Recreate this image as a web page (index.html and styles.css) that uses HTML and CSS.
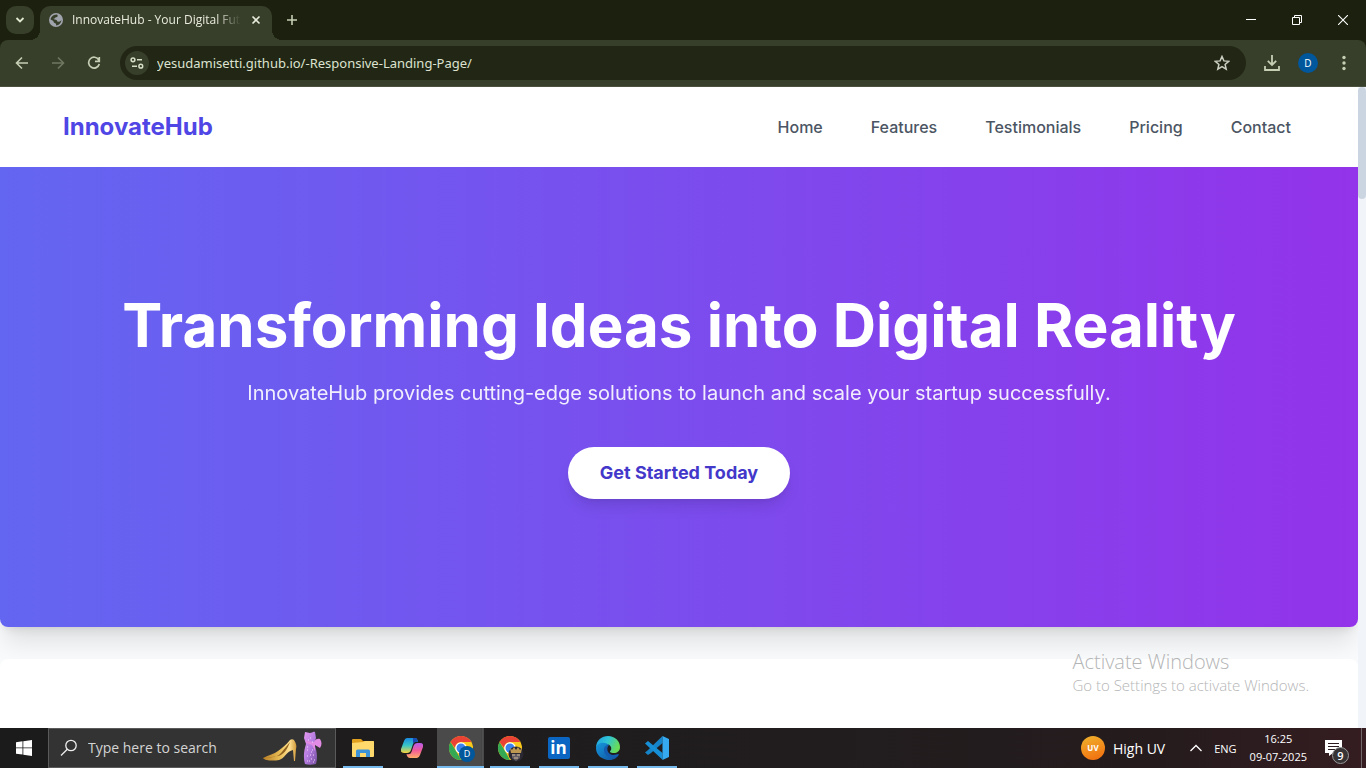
FILE: index.html
```html
<!DOCTYPE html>
<html lang="en">
<head>
<meta charset="utf-8">
<title>InnovateHub - Your Digital Future</title>
<link rel="stylesheet" href="styles.css">
</head>
<body>
<div class="tabstrip">
  <button class="tab-search" aria-label="Search tabs"><svg width="10" height="8" viewBox="0 0 10 8"><path d="M1.500 2 5 5.500 8.500 2" fill="none" stroke="#e0e8cf" stroke-width="1.800"/></svg></button>
  <div class="tab">
    <svg width="14" height="14" viewBox="0 0 14 14"><circle cx="7" cy="7" r="7" fill="#a0a4ac"/><path d="M7.500 1.400c1.500 0 1.500 2 .5 2.600s-2 .2-2.200 1.500H4.500c.3 1.300 2.300 1 3 1.600.8.700.3 1.600 1.600 1.700 1.200 0 2.200-.3 3.300-1.800-.2 3-2.400 5.400-5.400 5.500.3-1 .3-2-1-2.300-1.500-.3-1-1.800-2-2.500L1.600 6.500C1.800 4 4 1.500 7.500 1.400z" fill="#373e2a"/></svg>
    <span class="tab-title">InnovateHub - Your Digital Future</span>
    <button class="tab-close" aria-label="Close tab"><svg width="10" height="10" viewBox="0 0 10 10"><path d="m1.500 1.500 7 7m0-7-7 7" stroke="#e8ecdc" stroke-width="1.600"/></svg></button>
  </div>
  <button class="new-tab" aria-label="New tab"><svg width="12" height="12" viewBox="0 0 12 12"><path d="M6 1v10M1 6h10" stroke="#c6ceb4" stroke-width="1.600"/></svg></button>
  <div class="window-controls">
    <button aria-label="Minimize"><svg width="10" height="10" viewBox="0 0 10 10"><path d="M0 4.500h10" stroke="#fff"/></svg></button>
    <button aria-label="Restore"><svg width="10" height="10" viewBox="0 0 10 10"><path d="M.5 2.500h7v7h-7zM2.500 2.500v-2h7v7h-2" fill="none" stroke="#fff"/></svg></button>
    <button aria-label="Close window"><svg width="10" height="10" viewBox="0 0 10 10"><path d="m0 0 10 10m0-10-10 10" stroke="#fff" stroke-width="1.100"/></svg></button>
  </div>
</div>
<div class="toolbar">
  <button class="tool" aria-label="Back"><svg width="14" height="14" viewBox="0 0 14 14"><path d="M13 7H2M7 1.500 1.500 7 7 12.500" fill="none" stroke="#c6ceb4" stroke-width="1.600"/></svg></button>
  <button class="tool" aria-label="Forward"><svg width="14" height="14" viewBox="0 0 14 14"><path d="M1 7h11M7 1.500 12.500 7 7 12.500" fill="none" stroke="#707761" stroke-width="1.600"/></svg></button>
  <button class="tool" aria-label="Reload"><svg width="14" height="14" viewBox="0 0 14 14"><path d="M11.800 4A5.400 5.400 0 1 0 12.300 8M12.300 1v4.300H8" fill="none" stroke="#c6ceb4" stroke-width="1.700"/></svg></button>
  <div class="omnibox">
    <button class="site-info" aria-label="Site information"><svg width="14" height="12" viewBox="0 0 14 12" fill="none" stroke="#d7dec6" stroke-width="1.500"><circle cx="3" cy="2.800" r="1.900"/><path d="M7 2.800h5M2 9.200h5"/><circle cx="10.800" cy="9.200" r="1.900"/></svg></button>
    <input class="url" type="text" aria-label="Address" value="yesudamisetti.github.io/-Responsive-Landing-Page/">
    <button class="star" aria-label="Bookmark"><svg width="16" height="16" viewBox="0 0 16 16"><path d="m8 1.500 1.900 4.400 4.800.4-3.600 3.200 1.100 4.700L8 11.700l-4.200 2.500 1.100-4.700L1.300 6.300l4.800-.4z" fill="none" stroke="#cbd0c2" stroke-width="1.500"/></svg></button>
  </div>
  <button class="download" aria-label="Downloads"><svg width="16" height="16" viewBox="0 0 16 16"><path d="M8 0v9.500M3.800 5.800 8 10l4.200-4.200M1 11v4h14v-4" fill="none" stroke="#c6ceb4" stroke-width="1.800"/></svg></button>
  <button class="avatar" aria-label="Profile">D</button>
  <button class="kebab" aria-label="Menu"><svg width="4" height="16" viewBox="0 0 4 16" fill="#c6ceb4"><circle cx="2" cy="2.500" r="1.700"/><circle cx="2" cy="8" r="1.700"/><circle cx="2" cy="13.500" r="1.700"/></svg></button>
</div>
<div class="viewport">
  <div class="page">
    <header class="site-header">
      <a class="brand" href="#home">InnovateHub</a>
      <nav class="nav">
        <a href="#home">Home</a>
        <a href="#features">Features</a>
        <a href="#testimonials">Testimonials</a>
        <a href="#pricing">Pricing</a>
        <a href="#contact">Contact</a>
      </nav>
    </header>
    <section class="hero" id="home">
      <h1>Transforming Ideas into Digital Reality</h1>
      <p>InnovateHub provides cutting-edge solutions to launch and scale your startup successfully.</p>
      <a class="cta" href="#pricing">Get Started Today</a>
    </section>
    <section class="features" id="features"></section>
  </div>
  <div class="scrollbar"><div class="thumb"></div></div>
  <div class="watermark"><strong>Activate Windows</strong><span>Go to Settings to activate Windows.</span></div>
</div>
<footer class="taskbar">
  <button class="start" aria-label="Start"><svg width="16" height="16" viewBox="0 0 16 16" fill="#fff"><path d="M0 2.200 6.500 1.300v6.200H0zM7.300 1.200 16 0v7.500H7.300zM0 8.300h6.500v6.300L0 13.700zM7.300 8.300H16V16l-8.700-1.200z"/></svg></button>
  <label class="search">
    <svg width="18" height="18" viewBox="0 0 18 18"><circle cx="11" cy="6.500" r="5.200" fill="none" stroke="#eee" stroke-width="1.300"/><path d="M7.300 10.200 1 16.500" stroke="#eee" stroke-width="1.300"/></svg>
    <input type="text" placeholder="Type here to search" aria-label="Type here to search">
    <svg class="doodle" width="62" height="36" viewBox="0 0 62 36">
      <defs>
        <linearGradient id="gold" x1="0" x2="1"><stop offset="0" stop-color="#b77d25"/><stop offset=".5" stop-color="#e9bd55"/><stop offset=".8" stop-color="#ffe092"/><stop offset="1" stop-color="#d19a38"/></linearGradient>
        <linearGradient id="dress" x1="0" x2="1" y2="1"><stop offset="0" stop-color="#e69af0"/><stop offset=".5" stop-color="#b47be0"/><stop offset="1" stop-color="#75509e"/></linearGradient>
      </defs>
      <path d="M0 28c6-3 11-4 15-7s8-6 12-11c1-1 3-1 4 0 2 3 3 6 2 9l-1 12h-1l-1-11c-6 1-9 9-14 10-5 1-14 1-16-2z" fill="url(#gold)"/><path d="M4 27c7 1 11-1 13-3s5-6 10-12c-3 8-7 13-12 14-4 1-7 1-11 1" fill="#8c601d"/>
      <path d="M42 2c2 0 3 1 5 1s3-2 5-1l1 6-2 6c3 6 4 14 2 20-4 1-8 1-11 0-2-6-1-14 1-20l-2-6z" fill="url(#dress)"/>
      <path d="M51 12c1-3 4-4 6-3 2 3 2 6 0 9l-5-3v6l-3-6-6-2v-2z" fill="#e28be5"/>
      <path d="M44 20h1m3 2h1m1 3h1m-7 1h1m3 3h1m2 1h1m-8 1h1m-1-14h1m2-9h1m-3 2h1m3 2h1M47 25h1m-2 6h1m3 1h1m-2-12h1" stroke="#f1d7ff" stroke-width="1"/>
    </svg>
  </label>
  <div class="apps">
    <button class="app running" aria-label="File Explorer"><svg width="22" height="18" viewBox="0 0 22 18"><path d="M0 1q0-1 1-1h8l2 2h10q1 0 1 1v14H0z" fill="#e2a01f"/><path d="M0 4l11-1 2-1h8q1 0 1 1v14q0 1-1 1H1q-1 0-1-1z" fill="#ffd96b"/><path d="M4 18v-6q0-1.500 1.500-1.500h11q1.500 0 1.500 1.500v6h-4v-4H8v4z" fill="#3d93d8"/></svg></button>
    <button class="app" aria-label="Copilot"><svg width="22" height="20" viewBox="0 0 22 20"><defs><linearGradient id="cool" x2="0" y2="1"><stop stop-color="#198be1"/><stop offset=".5" stop-color="#39c6c5"/><stop offset="1" stop-color="#f7d43c"/></linearGradient><linearGradient id="warm" x2="0" y2="1"><stop stop-color="#b75bed"/><stop offset=".5" stop-color="#f15c98"/><stop offset="1" stop-color="#ffad68"/></linearGradient></defs><path d="M6 0h8q2 0 2.500 2l.5 2q-4-1-5 2l-2 6q-1 3-4 3H3q-4 0-3-4L3 3q1-3 3-3z" fill="url(#cool)"/><path d="M16 20H9q-2 0-3-2l-.5-2q4 1 5-2l2-6q1-3 4-3H19q4 0 3 4l-3 8q-1 3-3 3z" fill="url(#warm)"/><path d="M12 0h2q2 0 2.500 2l.5 2q-4-1-5 2z" fill="#174bb3"/></svg></button>
    <button class="app running active" aria-label="Chrome, profile D"><svg width="24" height="24" viewBox="0 0 24 24"><circle cx="12" cy="12" r="12" fill="#fbc91a"/><path d="M1.600 6 7 15l5 9A12 12 0 0 1 1.600 6z" fill="#34a853"/><path d="M1.600 6A12 12 0 0 1 22.400 6H12q-5 0-6 6z" fill="#ea4335"/><circle cx="12" cy="12" r="5.800" fill="#fff"/><circle cx="12" cy="12" r="4.500" fill="#3b82ee"/></svg><span class="profile">D</span></button>
    <button class="app running" aria-label="Chrome, second profile"><svg width="24" height="24" viewBox="0 0 24 24" overflow="visible"><circle cx="12" cy="12" r="12" fill="#fbc91a"/><path d="M1.600 6 7 15l5 9A12 12 0 0 1 1.600 6z" fill="#34a853"/><path d="M1.600 6A12 12 0 0 1 22.400 6H12q-5 0-6 6z" fill="#ea4335"/><circle cx="12" cy="12" r="5.800" fill="#fff"/><circle cx="12" cy="12" r="4.500" fill="#3b82ee"/><circle cx="18" cy="18" r="7.500" fill="#292833"/><path d="m12 12 2 2 2-3 2 3 2-3 2 3 2-2-1 5H13z" fill="#bd9850"/><path d="M14 18h8v4l-4 3-4-3z" fill="#625d62"/><path d="M14 19h3m2 0h3m-6 3h4" stroke="#d0bc98"/></svg></button>
    <button class="app running" aria-label="LinkedIn"><span class="linkedin">in</span></button>
    <button class="app running" aria-label="Edge"><svg width="24" height="24" viewBox="0 0 24 24"><defs><linearGradient id="edgeTop" x2="1" y2=".4"><stop stop-color="#1d9ce0"/><stop offset=".5" stop-color="#2fc4d7"/><stop offset="1" stop-color="#68dc58"/></linearGradient><linearGradient id="edgeLow" x2="1" y2="1"><stop stop-color="#1598dd"/><stop offset="1" stop-color="#114f9c"/></linearGradient></defs><path d="M0 12C0 4 6 0 12 0c7 0 12 5 12 11 0 4-3 6-6 6-4 0-5-1-3-3 1-3-1-6-6-6-4 0-8 1-9 4z" fill="url(#edgeTop)"/><path d="M0 12c1-5 8-7 13-3-5 0-6 12 8 11 1 0 1 1 0 1-4 4-10 4-15 1-4-2-6-6-6-10z" fill="url(#edgeLow)"/><path d="M8 14c0-3 2-5 5-5-3 3-2 9 4 10 2 0 4-1 5-1s1 1 0 2c-7 4-14 0-14-6z" fill="#145caf"/></svg></button>
    <button class="app running" aria-label="Visual Studio Code"><svg width="24" height="24" viewBox="0 0 24 24"><path d="m17.500 0-15 14.500L0 16.500l3 2.500 3-2L17.500 7z" fill="#1684c8"/><path d="M3 5 0 7.500l17.500 16.200V17L6 7.500z" fill="#168fd7"/><path d="M17.500 0 24 3v18l-6.500 3z" fill="#35aaf1"/></svg></button>
  </div>
  <div class="tray">
    <button class="weather"><span class="uv">UV</span>High UV</button>
    <button class="chevron" aria-label="Show hidden icons"><svg width="12" height="8" viewBox="0 0 12 8"><path d="M.5 7 6 1.500 11.500 7" fill="none" stroke="#fff" stroke-width="1.300"/></svg></button>
    <button class="lang">ENG</button>
    <button class="clock"><span>16:25</span><span>09-07-2025</span></button>
    <button class="notify" aria-label="9 notifications"><svg width="17" height="16" viewBox="0 0 17 16"><path d="M0 0h17v13h-9l-4 3v-3H0z" fill="#fff"/><path d="M3 3.500h11M3 6.500h11M3 9.500h7" stroke="#2b1b1e"/></svg><span class="count">9</span></button>
  </div>
</footer>
</body>
</html>
```
FILE: styles.css
```css
* { box-sizing: border-box; }
body {
  margin: 0;
  height: 100vh;
  display: flex;
  flex-direction: column;
  overflow: hidden;
  font-family: "Open Sans", "Noto Sans", sans-serif;
  background: #1b210e;
}
button {
  border: 0;
  padding: 0;
  background: none;
  color: inherit;
  font: inherit;
  display: flex;
  align-items: center;
  justify-content: center;
}
a { text-decoration: none; }
svg { display: block; flex: none; }

/* Browser window */
.tabstrip {
  flex: none;
  height: 40px;
  display: flex;
  align-items: center;
  padding-left: 6px;
  background: #1b210e;
}
.tab-search {
  width: 28px;
  height: 28px;
  border-radius: 10px;
  background: #373e2a;
}
.tab {
  position: relative;
  align-self: flex-end;
  width: 232px;
  height: 34px;
  margin-left: 6px;
  padding: 0 10px 6px 9px;
  display: flex;
  align-items: center;
  gap: 9px;
  border-radius: 10px 10px 0 0;
  background: #373e2a;
}
.tab::before,
.tab::after {
  content: "";
  position: absolute;
  bottom: 0;
  width: 10px;
  height: 10px;
}
.tab::before { right: 100%; background: radial-gradient(circle at 0 0, transparent 10px, #373e2a 10px); }
.tab::after { left: 100%; background: radial-gradient(circle at 100% 0, transparent 10px, #373e2a 10px); }
.tab-title {
  flex: 1;
  overflow: hidden;
  white-space: nowrap;
  font-size: 12px;
  line-height: 16px;
  color: #e8ecdc;
  -webkit-mask-image: linear-gradient(to right, #000 85%, transparent);
  mask-image: linear-gradient(to right, #000 85%, transparent);
}
.tab-close { width: 12px; height: 16px; }
.new-tab { width: 28px; height: 28px; margin-left: 6px; }
.window-controls { margin-left: auto; display: flex; }
.window-controls button { width: 46px; height: 40px; }
.toolbar {
  flex: none;
  height: 47px;
  display: flex;
  align-items: center;
  padding: 0 12px 0 4px;
  border-radius: 8px 8px 0 0;
  border-bottom: 1px solid #4b513f;
  background: #373e2a;
}
.tool { width: 36px; height: 34px; }
.omnibox {
  flex: 1;
  height: 34px;
  margin: 0 14px 0 8px;
  padding: 0 15px 0 5px;
  display: flex;
  align-items: center;
  border-radius: 17px;
  background: #212714;
}
.site-info { width: 24px; height: 24px; border-radius: 50%; background: #373e2a; }
.url {
  flex: 1;
  min-width: 0;
  margin-left: 8px;
  padding: 0;
  border: 0;
  background: none;
  color: #dde2d0;
  font: 13px/20px "Noto Sans", sans-serif;
}
.star { width: 18px; height: 24px; }
.download { width: 24px; height: 24px; }
.avatar {
  width: 20px;
  height: 20px;
  margin-left: 14px;
  border-radius: 50%;
  background: #01579b;
  color: #fff;
  font-size: 10px;
}
.kebab { width: 20px; height: 24px; margin-left: 16px; }

/* Landing page */
.viewport {
  position: relative;
  flex: 1;
  min-height: 0;
  display: flex;
  overflow: hidden;
  background: #f9fafb;
}
.page {
  flex: 1;
  display: flex;
  flex-direction: column;
  font-family: Inter, sans-serif;
}
.site-header {
  width: 100%;
  padding: 24px 67px 24px 63px;
  display: flex;
  align-items: center;
  justify-content: space-between;
  background: #fff;
}
.brand { color: #4f46e5; font-size: 24px; font-weight: 700; line-height: 32px; }
.nav { display: flex; gap: 48px; }
.nav a { color: #4b5563; font-size: 16px; font-weight: 500; line-height: 24px; }
.hero {
  flex: none;
  padding: 128px 24px;
  display: flex;
  flex-direction: column;
  align-items: center;
  text-align: center;
  color: #fff;
  border-radius: 0 0 8px 8px;
  background: linear-gradient(to right, #6366f1, #9333ea);
  box-shadow: 0 20px 25px -5px rgba(0, 0, 0, .1), 0 8px 10px -6px rgba(0, 0, 0, .1);
}
.hero h1 { margin: 0 0 24px; font-size: 60px; font-weight: 700; line-height: 60px; }
.hero p { margin: 0 0 40px; font-size: 20px; line-height: 28px; opacity: .9; }
.cta {
  padding: 12px 32px;
  border-radius: 26px;
  background: #fff;
  color: #4338ca;
  font-size: 18px;
  font-weight: 700;
  line-height: 28px;
  box-shadow: 0 10px 15px -3px rgba(0, 0, 0, .1), 0 4px 6px -4px rgba(0, 0, 0, .1);
}
.features { flex: 1; margin-top: 32px; border-radius: 8px 8px 0 0; background: #fff; }
.scrollbar { width: 8px; background: #f1f5f9; }
.thumb { height: 112px; border-radius: 4px; background: #cbd5e1; }
.watermark {
  position: absolute;
  right: 57px;
  bottom: 33px;
  display: flex;
  flex-direction: column;
  color: #b4b5b6;
  font-size: 15px;
  font-weight: 300;
  line-height: 20px;
}
.watermark strong { font-size: 20px; font-weight: 300; line-height: 26px; }

/* Taskbar */
.taskbar {
  flex: none;
  height: 40px;
  display: flex;
  background: linear-gradient(to right, #1b1b1c, #211d1e 60%, #251b1d 85%, #351d21);
  color: #fff;
}
.start { width: 48px; }
.search {
  width: 288px;
  padding: 0 10px 0 11px;
  display: flex;
  align-items: center;
  border: 1px solid #5a5a5a;
  background: #333;
}
.search input {
  flex: 1;
  min-width: 0;
  margin-left: 10px;
  padding: 0;
  border: 0;
  background: none;
  font: 14px/20px "Open Sans", "Noto Sans", sans-serif;
}
.search input::placeholder { color: #d4d4d4; opacity: 1; }
.apps { display: flex; margin-left: 2px; }
.app { position: relative; width: 49px; }
.app.running::after {
  content: "";
  position: absolute;
  left: 5px;
  right: 4px;
  bottom: 0;
  height: 2px;
  background: #76b9ed;
}
.app.active { background: linear-gradient(to right, transparent 1px, #4a4a4b 1px, #4a4a4b 45px, #363636 45px, #555 46px, #444 48px, transparent 48px); }
.app.active::after { left: 1px; right: 1px; }
.profile {
  position: absolute;
  left: 23px;
  top: 18px;
  width: 16px;
  height: 16px;
  border-radius: 50%;
  background: #01579b;
  font-size: 9px;
  line-height: 16px;
}
.linkedin {
  width: 22px;
  height: 22px;
  border-radius: 2px;
  background: #0a66c2;
  font: 700 17px/21px "Open Sans", sans-serif;
}
.tray { margin-left: auto; display: flex; align-items: center; font-size: 11px; }
.tray button { height: 40px; }
.weather { gap: 8px; font-size: 14px; }
.uv {
  width: 24px;
  height: 24px;
  border-radius: 50%;
  background: linear-gradient(160deg, #efb32d, #f26a0d);
  font-size: 8px;
  font-weight: 700;
  line-height: 24px;
}
.chevron { width: 12px; margin-left: 25px; }
.lang { margin-left: 12px; }
.clock { margin-left: 13px; flex-direction: column; line-height: 18px; }
.notify { position: relative; width: 17px; margin-left: 18px; }
.count {
  position: absolute;
  left: 7px;
  top: 19px;
  width: 17px;
  height: 17px;
  border: 1px solid #999;
  border-radius: 50%;
  background: #383436;
  font-size: 11px;
  font-weight: 600;
  line-height: 15px;
}
.tray::after { content: ""; width: 1px; height: 40px; margin: 0 4px 0 19px; background: #72666a; }
```
